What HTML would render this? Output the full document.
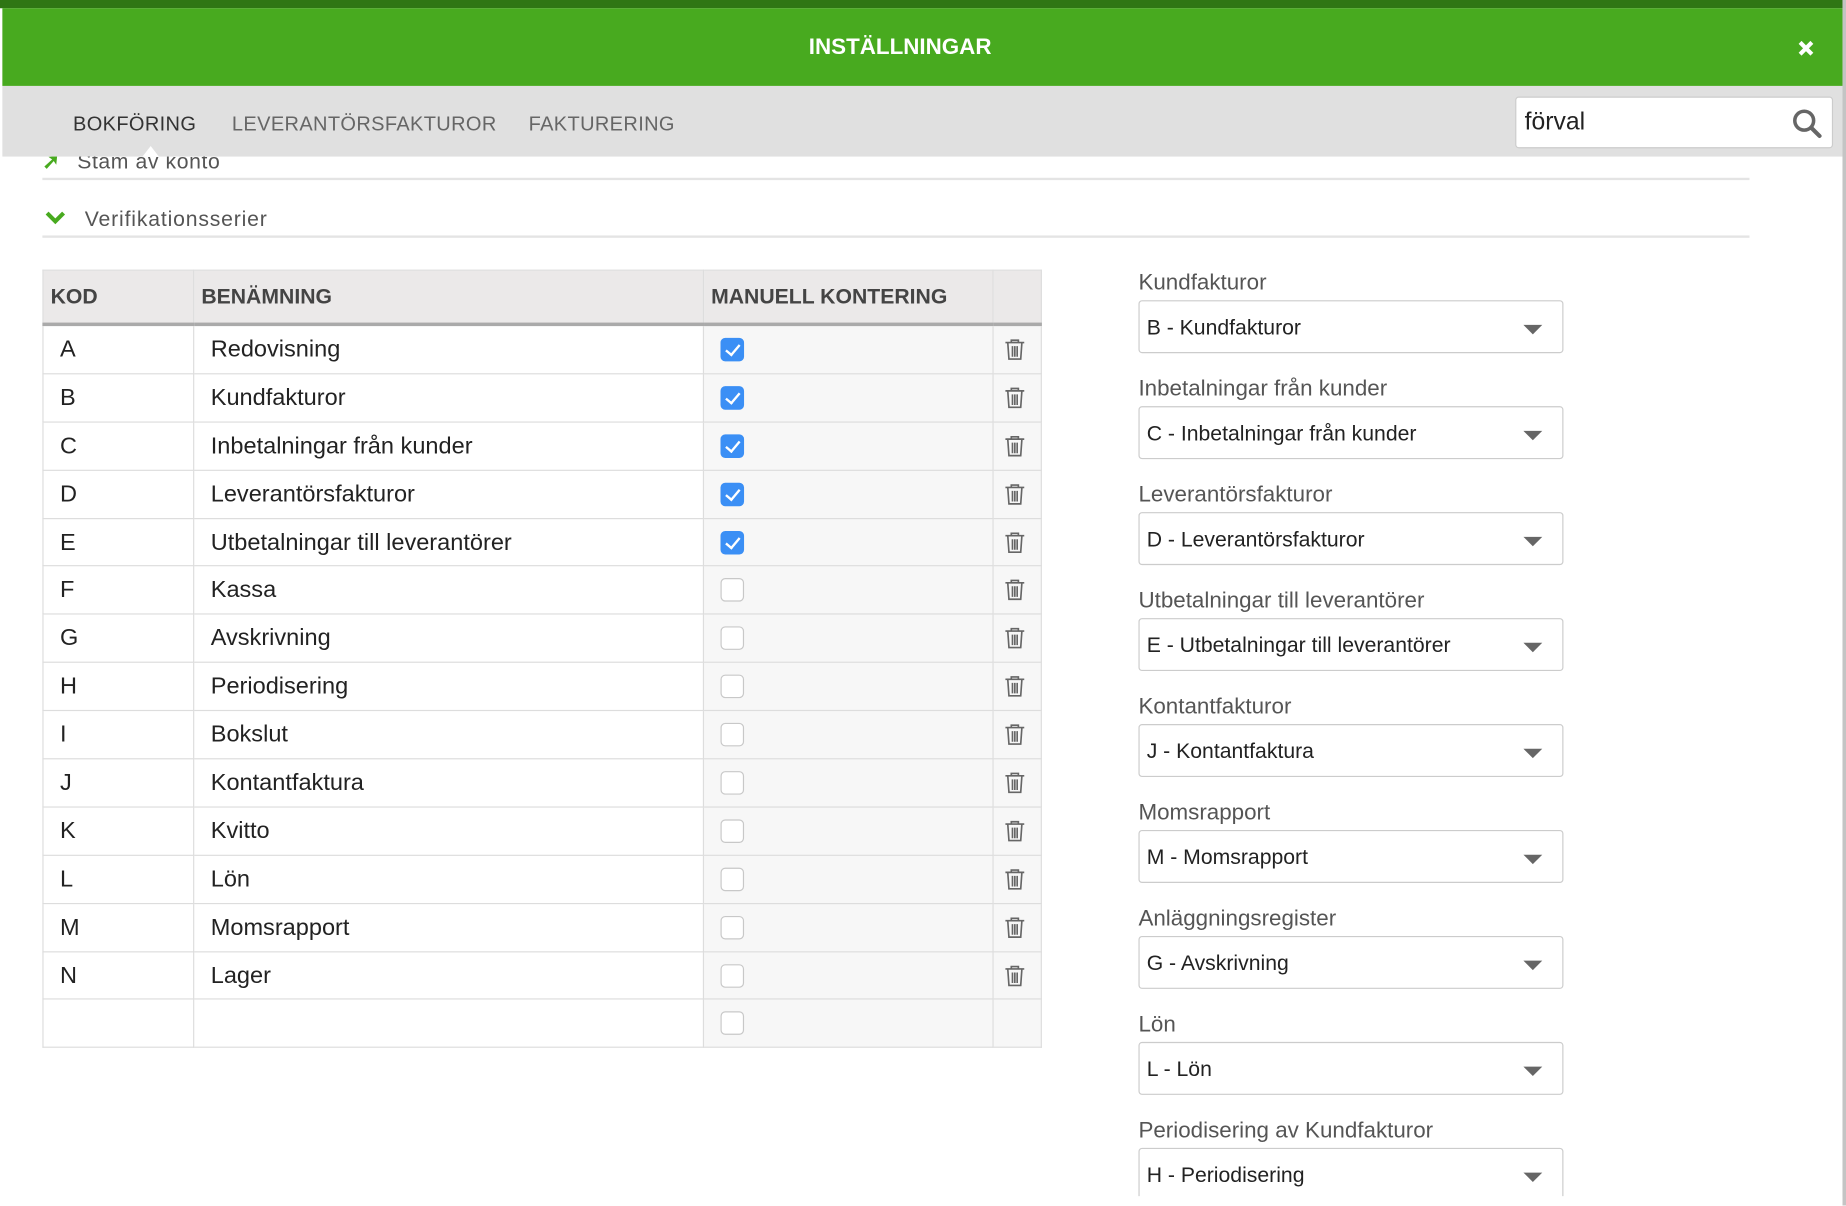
<!DOCTYPE html>
<html><head><meta charset="utf-8"><style>
html,body{margin:0;padding:0;width:1846px;height:1206px;overflow:hidden;background:#fff}
#w{position:absolute;left:0;top:0;width:1568px;height:1024px;transform:scale(1.17730);transform-origin:0 0;font-family:"Liberation Sans",sans-serif;overflow:hidden;background:#fff}
.a{position:absolute}
.topstrip{left:0;top:0;width:1568px;height:7px;background:#2f7614}
.rightbg{left:1565px;top:0;width:3px;height:1024px;background:#c4c4c4}
.hdr{left:2px;top:7px;width:1563px;height:66px;background:#48aa1f;color:#fff;font-weight:bold;font-size:19px;line-height:68px}
.tabs{left:2px;top:73px;width:1563px;height:60px;background:#e0e0e0}
.tab{top:96px;font-size:17px;color:#666;letter-spacing:.3px}
.line{left:36px;width:1450px;height:2px;background:#e4e4e4}
table{position:absolute;left:36px;top:229px;border-collapse:collapse;width:849px;font-size:20px;color:#222;table-layout:fixed}
td,th{border:1px solid #ddd;padding:0;height:39.9px;line-height:20px}
th{background:#ebe9e9;height:44px;border-bottom:3px solid #aaa;text-align:left;font-size:18px;color:#444;padding-left:6px}
td.c1{padding-left:14px}
td.c2{padding-left:14px}
td.c3{background:#f7f7f7;padding-left:14px;line-height:0}
td.c4{background:#f7f7f7;text-align:center;line-height:0}
td.c4 svg{display:block;margin:0 auto 0 9px}
.cb{display:inline-block;width:18px;height:18px;border:1px solid #c8c8c8;border-radius:4px;background:#fff;vertical-align:middle}
.cb.on{background:#3b8ff5;border-color:#3b8ff5;position:relative}
.cb.on:after{content:"";position:absolute;left:6px;top:2px;width:5px;height:10px;border:solid #fff;border-width:0 2px 2px 0;transform:rotate(40deg)}
.lbl{left:967px;font-size:19px;color:#555}
.sel{left:967px;width:361px;height:45px;border:1px solid #ccc;border-radius:3px;background:#fff;font-size:18px;color:#222;line-height:44px;padding-left:6px;box-sizing:border-box}
.sel:after{content:"";position:absolute;right:17px;top:20px;border-left:8px solid transparent;border-right:8px solid transparent;border-top:8px solid #666}
</style></head><body><div id="w">
<div class="a topstrip"></div>
<div class="a rightbg"></div>
<div class="a" style="left:36px;top:127px;font-size:18px;color:#555;letter-spacing:.5px"><span style="color:#48aa1f;font-weight:bold;margin-right:14px">➚</span>Stam av konto</div>
<div class="a line" style="top:151px"></div>
<div class="a" style="left:38px;top:176px;font-size:18px;color:#555;letter-spacing:.7px"><svg width="18" height="14" viewBox="0 0 18 14" style="margin-right:16px"><path d="M2 3l7 7 7-7" stroke="#48aa1f" stroke-width="3.5" fill="none"/></svg>Verifikationsserier</div>
<div class="a line" style="top:200px"></div>
<div class="a hdr"><span style="position:absolute;left:685px;top:0">INSTÄLLNINGAR</span><svg class="a" style="left:1525px;top:27px" width="14" height="14" viewBox="0 0 14 14"><path d="M2 2l10 10M12 2L2 12" stroke="#fff" stroke-width="3.5"/></svg></div>
<div class="a tabs"></div>
<div class="a tab" style="left:62px;color:#333">BOKFÖRING</div>
<div class="a tab" style="left:197px">LEVERANTÖRSFAKTUROR</div>
<div class="a tab" style="left:449px">FAKTURERING</div>
<div class="a" style="left:121px;top:124px;border-left:7px solid transparent;border-right:7px solid transparent;border-bottom:9px solid #fff"></div>
<div class="a" style="left:1287px;top:82px;width:270px;height:44px;background:#fff;border:1px solid #ccc;border-radius:3px;box-sizing:border-box;font-size:21px;line-height:42px;padding-left:7px;color:#222">förval
<svg class="a" style="right:8px;top:9px" width="26" height="26" viewBox="0 0 26 26"><circle cx="10.5" cy="10.5" r="8" stroke="#666" stroke-width="3" fill="none"/><path d="M16.5 16.5l7 7" stroke="#666" stroke-width="3.5" stroke-linecap="round"/></svg></div>

<table>
<colgroup><col style="width:128px"><col style="width:433px"><col style="width:246px"><col style="width:41px"></colgroup>
<tr><th>KOD</th><th>BENÄMNING</th><th>MANUELL KONTERING</th><th></th></tr>
<tbody id="tb"></tbody>
</table>
<script>
var rows=[["A","Redovisning",1],["B","Kundfakturor",1],["C","Inbetalningar från kunder",1],["D","Leverantörsfakturor",1],["E","Utbetalningar till leverantörer",1],["F","Kassa",0],["G","Avskrivning",0],["H","Periodisering",0],["I","Bokslut",0],["J","Kontantfaktura",0],["K","Kvitto",0],["L","Lön",0],["M","Momsrapport",0],["N","Lager",0],["","",0,1]];
var trash='<svg width="18" height="20" viewBox="0 0 18 20"><path d="M1 4h16M6 4V2h6v2M3 4l1 14h10l1-14M7 7v9M9 7v9M11 7v9" stroke="#666" stroke-width="1.4" fill="none"/></svg>';
var h="";rows.forEach(function(r){h+='<tr><td class="c1">'+r[0]+'</td><td class="c2">'+r[1]+'</td><td class="c3"><span class="cb'+(r[2]?' on':'')+'"></span></td><td class="c4">'+(r[3]?'':trash)+'</td></tr>'});
document.getElementById("tb").innerHTML=h;
</script>
<div class="a lbl" style="top:230px">Kundfakturor</div><div class="a sel" style="top:255px">B - Kundfakturor</div>
<div class="a lbl" style="top:320px">Inbetalningar från kunder</div><div class="a sel" style="top:345px">C - Inbetalningar från kunder</div>
<div class="a lbl" style="top:410px">Leverantörsfakturor</div><div class="a sel" style="top:435px">D - Leverantörsfakturor</div>
<div class="a lbl" style="top:500px">Utbetalningar till leverantörer</div><div class="a sel" style="top:525px">E - Utbetalningar till leverantörer</div>
<div class="a lbl" style="top:590px">Kontantfakturor</div><div class="a sel" style="top:615px">J - Kontantfaktura</div>
<div class="a lbl" style="top:680px">Momsrapport</div><div class="a sel" style="top:705px">M - Momsrapport</div>
<div class="a lbl" style="top:770px">Anläggningsregister</div><div class="a sel" style="top:795px">G - Avskrivning</div>
<div class="a lbl" style="top:860px">Lön</div><div class="a sel" style="top:885px">L - Lön</div>
<div class="a lbl" style="top:950px">Periodisering av Kundfakturor</div><div class="a sel" style="top:975px">H - Periodisering</div>
<div class="a" style="left:900px;top:1016px;width:665px;height:8px;background:#fff"></div>
</div></body></html>
